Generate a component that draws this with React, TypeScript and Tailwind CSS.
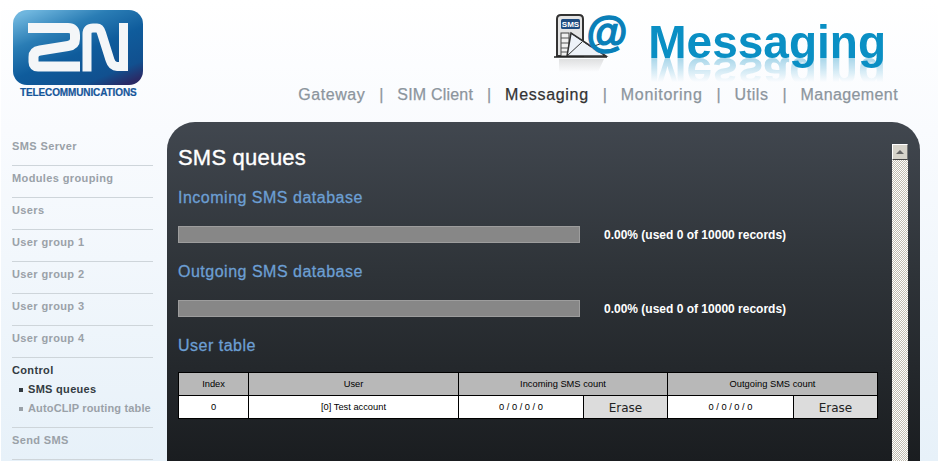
import React from 'react';

const navItems = [
    { label: 'Gateway', className: 'tracking-[0.55px]' },
    { label: 'SIM Client', className: 'tracking-[0.2px]' },
    { label: 'Messaging', className: 'tracking-[0.7px] text-[#333] [-webkit-text-stroke:0.25px_#333]' },
    { label: 'Monitoring', className: 'tracking-[0.7px]' },
    { label: 'Utils', className: 'tracking-[0.6px]' },
    { label: 'Management', className: 'tracking-[0.4px]' },
];
const menuTop = ['SMS Server', 'Modules grouping', 'Users', 'User group 1', 'User group 2', 'User group 3', 'User group 4'];

const Logo = () => (
    <svg width="130" height="75" viewBox="13 10 130 75" className="block">
        <defs>
            <linearGradient id="logoBg" x1="0.15" y1="0" x2="0.85" y2="1">
                <stop offset="0" stopColor="#6fb6de" />
                <stop offset="0.28" stopColor="#2a7db5" />
                <stop offset="0.55" stopColor="#0f5c9c" />
                <stop offset="0.85" stopColor="#11508f" />
                <stop offset="1" stopColor="#2a2a66" />
            </linearGradient>
        </defs>
        <rect x="13" y="10" width="130" height="75" rx="14" fill="url(#logoBg)" />
        <path d="M28 28H68Q75 28 75 35V39Q75 45 68 46L40 50.500Q33.500 51.500 33.500 57V62Q33.500 66.500 38 66.500H80" fill="none" stroke="#f4f6f8" strokeWidth="10" />
        <path d="M87 71.500V34Q87 28 93 28H97Q100 28 101.500 33L110 60Q112 66.500 117 66.500H123.500V23" fill="none" stroke="#f4f6f8" strokeWidth="9" />
    </svg>
);

const MessagingIcon = () => (
    <svg width="80" height="68" viewBox="0 -6 80 68" className="block">
        <defs>
            <linearGradient id="fade" x1="0" y1="0" x2="0" y2="1">
                <stop offset="0" stopColor="#999" stopOpacity="0.3" />
                <stop offset="1" stopColor="#999" stopOpacity="0" />
            </linearGradient>
        </defs>
        <path d="M3 44V7Q3 3 7 3H25Q29 3 29 7V44Z" fill="#e4e4e4" stroke="#333" strokeWidth="2" />
        <rect x="7" y="7" width="19" height="10" rx="1.500" fill="#1f4c80" />
        <text x="16.500" y="15" textAnchor="middle" fontSize="8" fontWeight="700" fill="#fff" fontFamily="'Liberation Sans', sans-serif">SMS</text>
        <rect x="7" y="21" width="8" height="23" fill="#f0f0f0" stroke="#444" />
        <path d="M7 26H15M7 31H15M7 36H15M7 40H15" stroke="#555" />
        <path d="M13 44L17 21L52 44Z" fill="#eef2f8" stroke="#333" strokeWidth="1.500" />
        <path d="M17 21L37 35L46 32M13 44L28 30" fill="none" stroke="#333" />
        <path d="M0 45H53" stroke="#222" strokeWidth="1.500" />
        <path d="M5 47H30V60H5ZM30 47H50L44 60H30Z" fill="url(#fade)" />
        <text x="53" y="35" textAnchor="middle" fontSize="42" fontWeight="700" fill="#0a7fb8" stroke="#0a7fb8" strokeWidth="1.400" fontFamily="'Liberation Sans', sans-serif">@</text>
    </svg>
);

const ProgressRow = () => (
    <div className="flex items-center h-[17px]">
        <div className="w-[402px] h-[17px] bg-[#878787] border border-[#9d9d9d]"></div>
        <span className="ml-[24px] text-[12px] font-bold text-white">0.00% (used 0 of 10000 records)</span>
    </div>
);

const Heading = ({ children, className }: { children: React.ReactNode; className: string }) => (
    <h3 className={`text-[16px] leading-[20px] tracking-[0.5px] font-normal text-[#6c9fd3] [-webkit-text-stroke:0.3px_#6c9fd3] ${className}`}>{children}</h3>
);

const App: React.FC = () => {
    return (
        <div className="w-[938px] h-[463px] overflow-hidden bg-white" style={{ fontFamily: "'Liberation Sans', Arial, sans-serif" }}>
            <div className="h-[461px] ml-[1px] flex flex-col overflow-hidden bg-[linear-gradient(180deg,#ffffff_0px,#f9fbfe_130px,#e7f1f9_100%)]">
                {/* HEADER */}
                <div className="h-[122px] shrink-0 flex justify-between">
                    <div className="pl-[12px] pt-[10px]">
                        <Logo />
                        <div className="ml-[7px] mt-[2px] text-[10px] leading-[12px] font-bold text-[#16569a] tracking-[-0.12px] whitespace-nowrap [-webkit-text-stroke:0.2px_#16569a]">TELECOMMUNICATIONS</div>
                    </div>
                    <div className="flex flex-col items-end pr-[40px]">
                        <div className="flex items-start pt-[12px] pr-[12px] h-[85px]">
                            <div className="mr-[14px] mt-[-6px]"><MessagingIcon /></div>
                            <div className="mt-[2px] text-[46px] leading-[56px] font-bold text-[#0a8fc4] whitespace-nowrap [-webkit-box-reflect:below_-24px_linear-gradient(180deg,transparent_20px,rgba(0,0,0,0.35)_44px,transparent_44px)]">
                                Messaging
                            </div>
                        </div>
                        <div className="flex items-center h-[20px] text-[16px] text-[#8c959d] [-webkit-text-stroke:0.25px_#8c959d]">
                            {navItems.map((item, i) => (
                                <React.Fragment key={item.label}>
                                    {i > 0 && <span className="w-[32px] text-center">|</span>}
                                    <span className={item.className}>{item.label}</span>
                                </React.Fragment>
                            ))}
                        </div>
                    </div>
                </div>

                {/* BODY */}
                <div className="flex flex-1 min-h-0">
                    <div className="w-[166px] shrink-0 pl-[11px] pt-[12px]">
                        {menuTop.map((item) => (
                            <div key={item} className="w-[141px] h-[32px] pt-[5px] border-b border-[#ced5da] text-[11px] leading-[14px] font-bold tracking-[0.38px] text-[#9aa1a8]">{item}</div>
                        ))}
                        <div className="w-[141px] h-[70px] pt-[3px] border-b border-[#ced5da] text-[11px] leading-[19px] font-bold">
                            <div className="text-[#333b42] tracking-[0.35px]">Control</div>
                            <div className="flex items-center text-[#333b42] pl-[7px] tracking-[0.3px]"><span className="w-[4px] h-[4px] bg-[#333b42] mr-[5px]"></span>SMS queues</div>
                            <div className="flex items-center text-[#9aa1a8] pl-[7px] whitespace-nowrap tracking-[0.15px]"><span className="w-[4px] h-[4px] bg-[#9aa1a8] mr-[5px]"></span>AutoCLIP routing table</div>
                        </div>
                        <div className="w-[141px] h-[32px] pt-[5px] border-b border-[#ced5da] text-[11px] leading-[14px] font-bold tracking-[0.38px] text-[#9aa1a8]">Send SMS</div>
                    </div>

                    {/* PANEL */}
                    <div className="w-[753px] shrink-0 rounded-t-[28px] flex bg-[linear-gradient(180deg,#41474f_0%,#2e3338_45%,#1a1d20_100%)]">
                        <div className="w-[725px] shrink-0 pl-[11px] pt-[22px]">
                            <h2 className="text-[22px] leading-[28px] tracking-[0.2px] font-normal text-white [-webkit-text-stroke:0.35px_#fff]">SMS queues</h2>
                            <Heading className="mt-[16px] mb-[18px]">Incoming SMS database</Heading>
                            <ProgressRow />
                            <Heading className="mt-[19px] mb-[18px]">Outgoing SMS database</Heading>
                            <ProgressRow />
                            <Heading className="mt-[19px] mb-[16px]">User table</Heading>
                            <table className="w-[699px] table-fixed border-collapse border border-black text-[9.3px] text-black">
                                <colgroup>
                                    <col className="w-[70px]" />
                                    <col className="w-[210px]" />
                                    <col className="w-[125px]" />
                                    <col className="w-[84px]" />
                                    <col className="w-[126px]" />
                                    <col className="w-[84px]" />
                                </colgroup>
                                <thead>
                                    <tr className="h-[23px] bg-[#b8b8b8]">
                                        <th className="border border-black font-normal pt-[1px]">Index</th>
                                        <th className="border border-black font-normal pt-[1px]">User</th>
                                        <th colSpan={2} className="border border-black font-normal pt-[1px]">Incoming SMS count</th>
                                        <th colSpan={2} className="border border-black font-normal pt-[1px]">Outgoing SMS count</th>
                                    </tr>
                                </thead>
                                <tbody>
                                    <tr className="h-[23px] bg-white text-center">
                                        <td className="border border-black pt-[2px]">0</td>
                                        <td className="border border-black pt-[2px]">[0] Test account</td>
                                        <td className="border border-black pt-[2px]">0 / 0 / 0 / 0</td>
                                        <td className="border border-black pt-[1px] bg-[#dcdcdc] text-[12px] text-[#222]" style={{ fontFamily: "'DejaVu Sans', sans-serif" }}>Erase</td>
                                        <td className="border border-black pt-[2px]">0 / 0 / 0 / 0</td>
                                        <td className="border border-black pt-[1px] bg-[#dcdcdc] text-[12px] text-[#222]" style={{ fontFamily: "'DejaVu Sans', sans-serif" }}>Erase</td>
                                    </tr>
                                </tbody>
                            </table>
                        </div>
                        {/* SCROLLBAR */}
                        <div className="w-[16px] shrink-0 mt-[22px] flex flex-col">
                            <div className="h-[16px] shrink-0 bg-[#d6d3ca] border border-t-white border-l-white border-r-[#777] border-b-[#444] flex items-center justify-center">
                                <span className="w-0 h-0 border-x-[4px] border-x-transparent border-b-[4px] border-b-[#666]"></span>
                            </div>
                            <div className="flex-1 bg-[repeating-conic-gradient(#c0bcb0_0_25%,#ffffff_0_50%)] bg-[length:2px_2px]"></div>
                        </div>
                    </div>
                </div>
            </div>
        </div>
    );
};

export default App;
